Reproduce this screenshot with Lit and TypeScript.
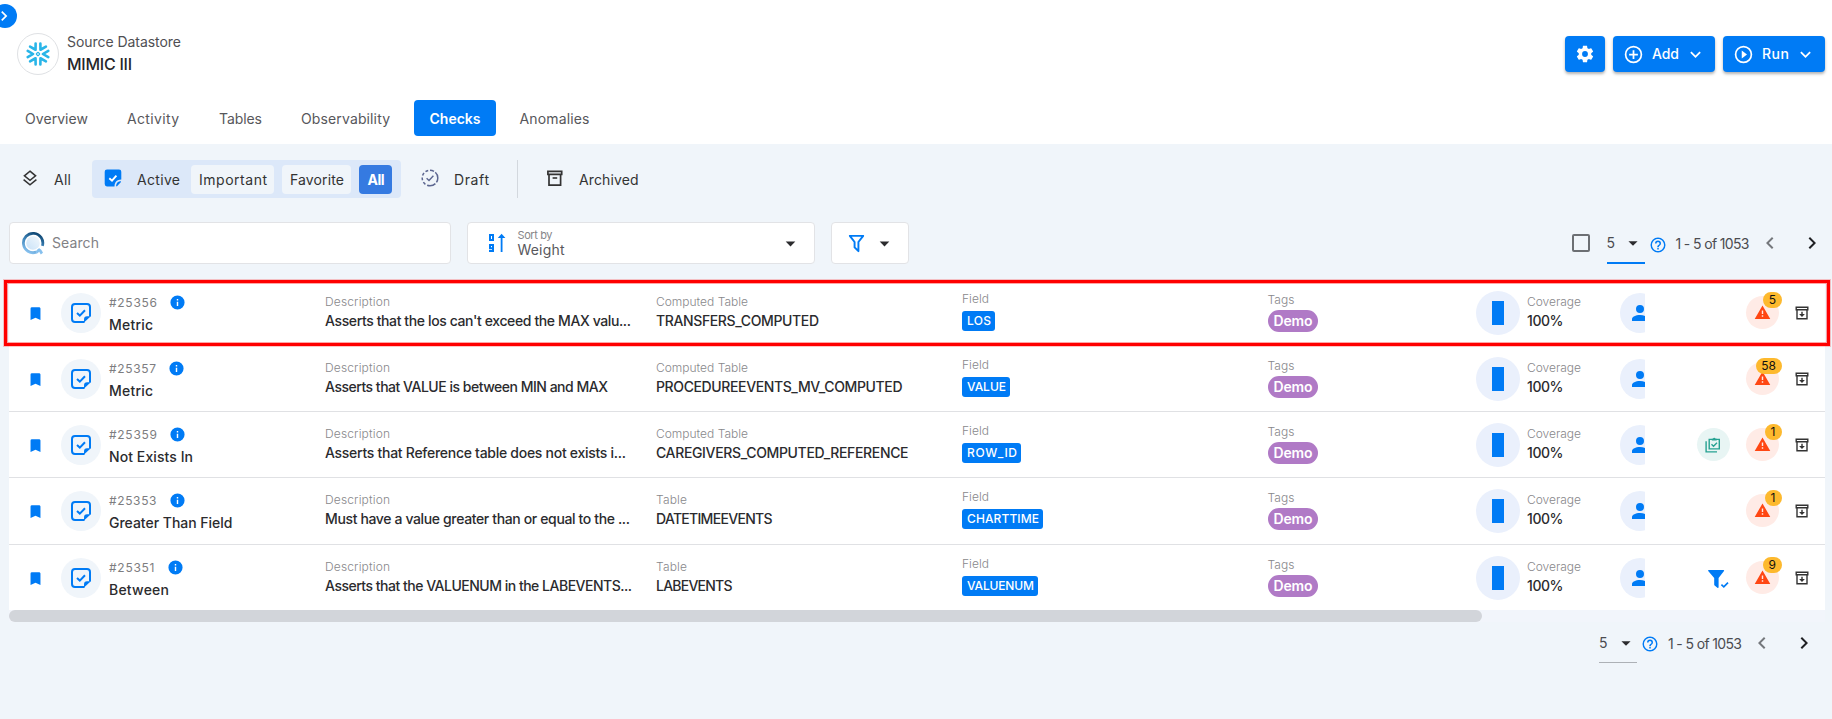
import { LitElement, html, css, svg, nothing } from "lit";
import { customElement, property } from "lit/decorators.js";

/* A single line of text whose tracking is tuned so the glyphs span `w` pixels. */
@customElement("fit-text")
class FitText extends LitElement {
  static styles = css`
    :host { display: block; white-space: pre; }
    .t { display: inline-block; }
  `;
  @property() text = "";
  @property({ type: Number }) w = 0;
  render() {
    return html`<span class="t">${this.text}</span>`;
  }
  updated() {
    const el = this.renderRoot.querySelector(".t") as HTMLElement;
    el.style.letterSpacing = "0px";
    const natural = el.getBoundingClientRect().width - 1;
    const gap = (this.w - natural) / Math.max(1, this.text.length - 1);
    el.style.letterSpacing = gap.toFixed(3) + "px";
    el.style.marginRight = (-gap).toFixed(3) + "px";
    this.style.width = this.w + "px";
  }
}

const t = (text: string, w: number, cls = "") =>
  html`<fit-text class=${cls} .text=${text} .w=${w}></fit-text>`;

const P: Record<string, string> = {
  bookmark: "M17,3H7A2,2 0 0,0 5,5V21L12,18L19,21V5C19,3.89 18.1,3 17,3Z",
  info: "M13,9H11V7H13M13,17H11V11H13M12,2A10,10 0 0,0 2,12A10,10 0 0,0 12,22A10,10 0 0,0 22,12A10,10 0 0,0 12,2Z",
  alert: "M13 14H11V9H13M13 18H11V16H13M1 21H23L12 2L1 21Z",
  account: "M12,4A4,4 0 0,1 16,8A4,4 0 0,1 12,12A4,4 0 0,1 8,8A4,4 0 0,1 12,4M12,14C16.42,14 20,15.79 20,18V20H4V18C4,15.79 7.58,14 12,14Z",
  cog: "M12,15.5A3.5,3.5 0 0,1 8.5,12A3.5,3.5 0 0,1 12,8.5A3.5,3.5 0 0,1 15.5,12A3.5,3.5 0 0,1 12,15.5M19.43,12.97C19.47,12.65 19.5,12.33 19.5,12C19.5,11.67 19.47,11.34 19.43,11L21.54,9.37C21.73,9.22 21.78,8.95 21.66,8.73L19.66,5.27C19.54,5.05 19.27,4.96 19.05,5.05L16.56,6.05C16.04,5.66 15.5,5.32 14.87,5.07L14.5,2.42C14.46,2.18 14.25,2 14,2H10C9.75,2 9.54,2.18 9.5,2.42L9.13,5.07C8.5,5.32 7.96,5.66 7.44,6.05L4.95,5.05C4.73,4.96 4.46,5.05 4.34,5.27L2.34,8.73C2.21,8.95 2.27,9.22 2.46,9.37L4.57,11C4.53,11.34 4.5,11.67 4.5,12C4.5,12.33 4.53,12.65 4.57,12.97L2.46,14.63C2.27,14.78 2.21,15.05 2.34,15.27L4.34,18.73C4.46,18.95 4.73,19.03 4.95,18.95L7.44,17.94C7.96,18.34 8.5,18.68 9.13,18.93L9.5,21.58C9.54,21.82 9.75,22 10,22H14C14.25,22 14.46,21.82 14.5,21.58L14.87,18.93C15.5,18.67 16.04,18.34 16.56,17.94L19.05,18.95C19.27,19.03 19.54,18.95 19.66,18.73L21.66,15.27C21.78,15.05 21.73,14.78 21.54,14.63L19.43,12.97Z",
  plus: "M12,20C7.59,20 4,16.41 4,12C4,7.59 7.59,4 12,4C16.41,4 20,7.59 20,12C20,16.41 16.41,20 12,20M12,2A10,10 0 0,0 2,12A10,10 0 0,0 12,22A10,10 0 0,0 22,12A10,10 0 0,0 12,2M13,7H11V11H7V13H11V17H13V13H17V11H13V7Z",
  play: "M12,20C7.59,20 4,16.41 4,12C4,7.59 7.59,4 12,4C16.41,4 20,7.59 20,12C20,16.41 16.41,20 12,20M12,2A10,10 0 0,0 2,12A10,10 0 0,0 12,22A10,10 0 0,0 22,12A10,10 0 0,0 12,2M10,16.5L16,12L10,7.5V16.5Z",
  down: "M7.41,8.58L12,13.17L16.59,8.58L18,10L12,16L6,10L7.41,8.58Z",
  right: "M8.59,16.58L13.17,12L8.59,7.41L10,6L16,12L10,18L8.59,16.58Z",
  left: "M15.41,16.58L10.83,12L15.41,7.41L14,6L8,12L14,18L15.41,16.58Z",
  caret: "M7,10L12,15L17,10H7Z",
  help: "M11,18H13V16H11V18M12,2A10,10 0 0,0 2,12A10,10 0 0,0 12,22A10,10 0 0,0 22,12A10,10 0 0,0 12,2M12,20C7.59,20 4,16.41 4,12C4,7.59 7.59,4 12,4C16.41,4 20,7.59 20,12C20,16.41 16.41,20 12,20M12,6A4,4 0 0,0 8,10H10A2,2 0 0,1 12,8A2,2 0 0,1 14,10C14,12 11,11.75 11,15H13C13,12.75 16,12.5 16,10A4,4 0 0,0 12,6Z",
  filter: "M15,19.88C15.04,20.18 14.94,20.5 14.71,20.71C14.32,21.1 13.69,21.1 13.3,20.71L9.29,16.7C9.06,16.47 8.96,16.16 9,15.87V10.75L4.21,4.62C3.87,4.19 3.95,3.56 4.38,3.22C4.57,3.08 4.78,3 5,3V3H19V3C19.22,3 19.43,3.08 19.62,3.22C20.05,3.56 20.13,4.19 19.79,4.62L15,10.75V19.88M7.04,5L11,10.06V15.58L13,17.58V10.05L16.96,5H7.04Z",
};

const icon = (name: string, size: number, cls = "") =>
  html`<svg class="ic ${cls}" width=${size} height=${size} viewBox="0 0 24 24"><path fill="currentColor" fill-rule="evenodd" d=${P[name]}></path></svg>`;

const snowflake = html`<svg class="ic" width="26" height="26" viewBox="-13 -13 26 26" fill="none" stroke="currentColor" stroke-width="2.6" stroke-linecap="round" stroke-linejoin="round">
  <rect x="-1.3" y="-1.3" width="2.6" height="2.6" rx=".4" transform="rotate(45)" stroke-width="1.2"></rect>
  ${[0, 60, 120, 180, 240, 300].map((a) => svg`<path transform="rotate(${a})" d="M10.3 -3.2 L4.9 0 L10.3 3.2"></path>`)}
</svg>`;

const layers = html`<svg class="ic" width="16" height="16" viewBox="0 0 16 16" fill="none" stroke="currentColor" stroke-width="1.5"><path d="M8 1.2 L13.6 5.8 L8 10.4 L2.4 5.8Z M1.6 9.6 L8 14.8 L14.4 9.6"></path></svg>`;

const noteSolid = html`<svg class="ic" width="18" height="18" viewBox="0 0 18 18"><path fill="#007bf5" d="M3 .5H15A2.3 2.3 0 0 1 17.3 2.8V10.6C13 10.8 10.6 13 10.5 17.4H3A2.3 2.3 0 0 1 .7 15.1V2.8A2.3 2.3 0 0 1 3 .5Z"></path><path fill="#007bf5" d="M17 12.2V13L13 17.2H12C12 14 14 12.3 17 12.2Z"></path><path d="M5.3 9.2L8 11.6L12.4 6.7" fill="none" stroke="#fff" stroke-width="1.9"></path></svg>`;

const noteLine = html`<svg class="ic" width="20" height="20" viewBox="0 0 20 20" fill="none" stroke="#007bf5" stroke-width="2"><path d="M13.5 19H4A3 3 0 0 1 1 16V4A3 3 0 0 1 4 1H16A3 3 0 0 1 19 4V13.5"></path><path d="M13 19.6V16.2A3 3 0 0 1 16 13.2H19.8Z" fill="#007bf5" stroke="none"></path><path d="M6 10L8.8 12.6L14 7.3"></path></svg>`;

const draft = html`<svg class="ic" width="18" height="18" viewBox="0 0 18 18" fill="none" stroke="#5c6690" stroke-width="1.5"><path d="M9 1.2A7.8 7.8 0 0 1 9 16.8" stroke-dasharray="4.2 1.6 11 1.6 8"></path><path d="M9 16.8A7.8 7.8 0 0 1 9 1.2" stroke-dasharray="2.9 2"></path><path d="M5.6 9.2L8 11.4L12.4 6.8" stroke-width="1.4"></path></svg>`;

const archive = html`<svg class="ic" width="16" height="16" viewBox="0 0 16 16" fill="none" stroke="currentColor" stroke-width="1.7"><path d="M.9 1.3H14.7V4.3H.9Z M2 4.5V15.1H13.6V4.5"></path><path d="M5.6 8H10.2" stroke-width="1.6"></path></svg>`;

const archiveDown = html`<svg class="ic" width="14" height="14" viewBox="0 0 14 14" fill="none" stroke="#333" stroke-width="1.4"><path d="M1.2 1.2H12.8V3.8H1.2Z M2 4V12.8H12V4"></path><path d="M6.3 5.8H7.7V8H9.9L7 10.9L4.1 8H6.3Z" fill="#333" stroke="none"></path></svg>`;

const clipboard = html`<svg class="ic" width="16" height="16" viewBox="0 0 16 16" fill="none" stroke="#26a292" stroke-width="1.4"><path d="M4.2 2.4H14.3V11.9H4.2Z"></path><path d="M1.1 4.2V14.9H12"></path><path d="M6.8 3.6V1.7H8A1.3 1.3 0 0 1 10.5 1.7H11.7V3.6Z" fill="#26a292" stroke="none"></path><path d="M6.5 7.3L8.5 9.2L12 5.7"></path></svg>`;

const filterCheck = html`<svg class="ic" width="21" height="19" viewBox="0 0 21 19"><path fill="#007bf5" d="M.6 0H15.6A.6.6 0 0 1 16 1L10.6 8V17.2A.7.7 0 0 1 9.4 17.7L6.6 15.4A1 1 0 0 1 6.2 14.5V8L.2 1A.6.6 0 0 1 .6 0Z"></path><path d="M13.4 14.6L15.8 16.8L20 12.6" fill="none" stroke="#007bf5" stroke-width="1.7"></path></svg>`;

const searchQ = html`<svg class="ic" width="24" height="24" viewBox="0 0 24 24" fill="none"><defs>
  <linearGradient id="q" x1=".75" y1="0" x2=".3" y2="1"><stop offset="0" stop-color="#0d4470"></stop><stop offset=".5" stop-color="#3f86bb"></stop><stop offset="1" stop-color="#86c0ee"></stop></linearGradient>
  <linearGradient id="d" x1="0" y1="1" x2="1" y2="0"><stop offset="0" stop-color="#c9e2f8"></stop><stop offset="1" stop-color="#f2f8fd"></stop></linearGradient></defs>
  <circle cx="12" cy="12" r="6.8" fill="url(#d)"></circle>
  <path d="M21.4 14.8A9.7 9.7 0 1 0 15.2 21.2" stroke="url(#q)" stroke-width="2.8"></path>
  <path d="M15 21.4C17 20.6 17 19.4 18.2 18.9C20 20 19.6 21 20.9 22.6" stroke="#86c0ee" stroke-width="2.8"></path></svg>`;

const sortNum = html`<svg class="ic" width="18" height="20" viewBox="0 0 18 20" fill="none" stroke="#007bf5" stroke-width="2"><path d="M2 2H5V7H2Z M5 15.2H2V12H5V18H1"></path><path d="M13.6 19V3" stroke-width="1.8"></path><path d="M9.8 5L13.6 .8L17.4 5Z" fill="#007bf5" stroke="none"></path></svg>`;

interface Check {
  id: string; idW: number; name: string; nameW: number; desc: string; descW: number;
  kind: string; kindW: number; table: string; tableW: number; field: string; fieldW: number;
  extra?: "clip" | "filter"; count: string; h: number;
}

const CHECKS: Check[] = [
  { id: "#25356", idW: 47, name: "Metric", nameW: 43, desc: "Asserts that the los can't exceed the MAX valu...", descW: 305, kind: "Computed Table", kindW: 91, table: "TRANSFERS_COMPUTED", tableW: 162, field: "LOS", fieldW: 23, count: "5", h: 66 },
  { id: "#25357", idW: 46, name: "Metric", nameW: 43, desc: "Asserts that VALUE is between MIN and MAX", descW: 282, kind: "Computed Table", kindW: 91, table: "PROCEDUREEVENTS_MV_COMPUTED", tableW: 245.5, field: "VALUE", fieldW: 38, count: "58", h: 66 },
  { id: "#25359", idW: 47, name: "Not Exists In", nameW: 83, desc: "Asserts that Reference table does not exists i...", descW: 300, kind: "Computed Table", kindW: 91, table: "CAREGIVERS_COMPUTED_REFERENCE", tableW: 251.5, field: "ROW_ID", fieldW: 49, extra: "clip", count: "1", h: 66 },
  { id: "#25353", idW: 46.5, name: "Greater Than Field", nameW: 122.5, desc: "Must have a value greater than or equal to the ...", descW: 304, kind: "Table", kindW: 30, table: "DATETIMEEVENTS", tableW: 115.5, field: "CHARTTIME", fieldW: 71, count: "1", h: 67 },
  { id: "#25351", idW: 44.5, name: "Between", nameW: 59, desc: "Asserts that the VALUENUM in the LABEVENTS...", descW: 306, kind: "Table", kindW: 30, table: "LABEVENTS", tableW: 75.5, field: "VALUENUM", fieldW: 66, extra: "filter", count: "9", h: 65 },
];

@customElement("app-root")
class AppRoot extends LitElement {
  static styles = css`
    :host { display: block; width: 1832px; height: 719px; overflow: hidden; background: #f0f5fa; color: #2b2b2e; font: 14px/20px Inter, "Open Sans", sans-serif; position: relative; }
    * { box-sizing: border-box; }
    .ic { display: block; flex: none; }
    .row { display: flex; align-items: center; }
    header { background: #fff; height: 144px; position: relative; }
    .toggle { position: absolute; left: -7px; top: 4px; width: 24px; height: 24px; border-radius: 50%; background: #007bf5; color: #fff; padding: 2px 0 0 1px; }
    .brand { display: flex; justify-content: space-between; padding: 33px 7px 0 17px; height: 100px; align-items: flex-start; }
    .who { display: flex; gap: 8px; }
    .logo { width: 42px; height: 42px; border: 1px solid #dfe1e4; border-radius: 50%; display: grid; place-items: center; color: #29b5e8; }
    .l1 { font-size: 14px; line-height: 20px; margin-top: -1px; color: #4f4f53; }
    .l2 { font-size: 16px; line-height: 24px; font-weight: 500; color: #26262a; }
    .btns { display: flex; gap: 8px; padding-top: 3px; }
    .btn { height: 36px; display: flex; align-items: center; background: #007bf5; color: #fff; border-radius: 4px; box-shadow: 0 2px 3px rgba(0,0,0,.3); font-weight: 500; }
    .btn.sq { width: 40px; justify-content: center; }
    .btn.dd { width: 102px; padding-left: 10px; gap: 8px; }
    .btn .chev { margin-left: -1px; }
    nav { display: flex; align-items: center; padding-left: 25px; color: #57575b; }
    nav .tab { height: 36px; display: flex; align-items: center; padding-top: 2px; }
    .mr40 { margin-right: 40px; } .mr42 { margin-right: 41px; } .mr24 { margin-right: 24.5px; }
    nav .on { background: #007bf5; color: #fff; font-weight: 600; width: 82px; justify-content: center; border-radius: 4px; margin-right: 24px; }
    .filters { display: flex; align-items: center; height: 38px; margin-top: 16px; padding-left: 22px; color: #333; }
    .filters fit-text { padding-top: 2px; }
    .active { display: flex; align-items: center; width: 309px; height: 38px; background: #dce8f9; border-radius: 4px; margin-left: 22px; padding-left: 12px; }
    .chip { height: 29px; border-radius: 4px; background: #f0f5fa; display: flex; align-items: center; justify-content: center; }
    .c1 { width: 83px; margin: 0 8px 0 12px; } .c2 { width: 69px; margin-right: 8px; } .c3 { width: 33px; background: #357ae1; color: #fff; font-weight: 700; }
    .g16 { margin-left: 16px; } .g15 { margin-left: 15px; }
    .sep { width: 1px; height: 38px; background: #d3d8de; margin: 0 29px 0 29px; }
    .nud { margin-top: -2px; }
    .drafti { margin-left: 20px; }
    .tools { display: flex; align-items: center; margin-top: 24px; height: 42px; padding-left: 9px; }
    .box { background: #fff; border: 1px solid #e2e3e6; border-radius: 4px; height: 42px; display: flex; align-items: center; }
    .search { width: 442px; padding-left: 11px; gap: 7px; color: #818185; }
    .sort { width: 348px; margin-left: 16px; padding-left: 20px; }
    .sort .lab { width: 261px; margin-left: 11.5px; }
    .sort .small { font-size: 11px; line-height: 13px; color: #868689; }
    .val { line-height: 16px; color: #58585c; }
    .fbox { width: 78px; margin-left: 16px; padding-left: 12.5px; gap: 5.5px; }
    .blue { color: #007bf5; }
    .cb { width: 18px; height: 18px; border: 2px solid #6c6f73; border-radius: 2px; }
    .pager { display: flex; align-items: center; color: #4b4c50; }
    .top { margin-left: 663px; }
    .size { width: 38px; height: 41px; display: flex; align-items: center; border-bottom: 2px solid #007bf5; gap: 7.5px; }
    .size fit-text { padding-top: 1px; }
    .top .size { margin-left: 16.5px; }
    .size .caret { margin: 1px -2px 0 0; color: #2b2b2e; }
    .help { color: #007bf5; margin: 3px 9px 0 4px; }
    .range { padding-top: 2px; }
    .dim { color: #75787c; margin-left: 9px; }
    .dark { color: #202124; margin-left: 18px; }
    .table { position: relative; width: 1816px; margin: 16px 0 0 9px; }
    .mark { position: absolute; left: -5px; top: 0; width: 1826px; height: 66px; border: 3px solid #f00; box-shadow: 0 0 0 1px rgba(255,0,0,.22), inset 0 0 0 1px rgba(255,0,0,.35); z-index: 2; }
    .check { display: grid; grid-template-columns: 52px 48px 216px 331px 306px 305.5px 208px 51.5px 92.5px 25px 1fr; background: #fff; border-bottom: 1px solid #e0e1e4; }
    .check:last-of-type { border-bottom: 0; }
    .check > div { min-width: 0; }
    .bm { padding: 24.5px 0 0 17.5px; color: #007bf5; }
    .disc { width: 40px; height: 40px; border-radius: 50%; background: #f0f5fa; display: grid; place-items: center; margin-top: 13px; }
    .idr { display: flex; align-items: center; gap: 13px; height: 17px; margin-top: 14px; color: #7d7d80; font-size: 12px; }
    .idr .ic { color: #007bf5; }
    .name { font-weight: 500; margin-top: 4px; }
    .k { font-size: 12px; line-height: 16px; color: #88888b; font-weight: 300; }
    .v { line-height: 20px; font-weight: 500; margin-top: 1px; }
    .pad14 { padding-top: 14px; } .pad11 { padding-top: 11px; } .pad12 { padding-top: 12px; }
    .fchip { display: inline-flex; align-items: center; height: 20px; padding: 0 5px; border-radius: 3px; background: #007bf5; color: #fff; font-size: 12px; font-weight: 500; margin-top: 4px; }
    .tag { display: flex; align-items: center; width: 50px; height: 22px; padding-left: 6px; border-radius: 11px; background: #b07ac6; color: #fff; font-weight: 600; margin-top: 2px; }
    .cov { width: 44px; height: 44px; border-radius: 50%; background: #eaf0fc; display: grid; place-items: center; margin-top: 11px; }
    .bar { width: 12px; height: 24px; background: #007bf5; }
    .clip { overflow: hidden; width: 25px; }
    .clip .disc { background: #eaf0fc; color: #007bf5; width: 40px; }
    .acts { display: flex; justify-content: flex-end; padding: 16px 16px 0 0; }
    .rnd { position: relative; width: 33px; height: 33px; border-radius: 50%; display: grid; place-items: center; }
    .teal { background: #e8f5f4; margin-right: 16px; }
    .fc { margin: 8.5px 17px 0 0; }
    .warn { background: #ffebe6; color: #ff4713; margin-right: 16.5px; }
    .badge { position: absolute; right: -3px; top: -4px; height: 16px; min-width: 17px; padding: 0 5.5px; border-radius: 8px; background: #fdb92e; color: #111; font-size: 12px; line-height: 16px; text-align: center; }
    .ar { margin-top: 9.5px; }
    .track { height: 12px; width: 1816px; margin-left: 9px; background: #f2f5fb; }
    .thumb { width: 1473px; height: 12px; border-radius: 6px; background: #d2d5da; }
    .bottom { margin: 0 0 0 1599px; }
    .bottom .size { border-bottom: 1px solid #adb1b6; }
  `;

  private pager(cls: string, box: boolean) {
    return html`<div class="pager ${cls}">
      ${box ? html`<div class="cb"></div>` : nothing}
      <div class="size">${t("5", 8)}${icon("caret", 22, "caret")}</div>
      ${icon("help", 18, "help")}${t("1 - 5 of 1053", 73, "range")}
      ${icon("left", 24, "dim")}${icon("right", 24, "dark")}
    </div>`;
  }

  private check(c: Check) {
    return html`<div class="check" style="height:${c.h}px">
      <div class="bm">${icon("bookmark", 17)}</div>
      <div><div class="disc">${noteLine}</div></div>
      <div><div class="idr">${t(c.id, c.idW)}${icon("info", 17)}</div>${t(c.name, c.nameW, "name")}</div>
      <div class="pad14">${t("Description", 64, "k")}${t(c.desc, c.descW, "v")}</div>
      <div class="pad14">${t(c.kind, c.kindW, "k")}${t(c.table, c.tableW, "v")}</div>
      <div class="pad11">${t("Field", 26, "k")}<div class="fchip">${t(c.field, c.fieldW)}</div></div>
      <div class="pad12">${t("Tags", 26, "k")}<div class="tag">${t("Demo", 38)}</div></div>
      <div><div class="cov"><div class="bar"></div></div></div>
      <div class="pad14">${t("Coverage", 53, "k")}${t("100%", 35.5, "v")}</div>
      <div class="clip"><div class="disc">${icon("account", 24)}</div></div>
      <div class="acts">
        ${c.extra === "clip" ? html`<div class="rnd teal">${clipboard}</div>` : nothing}
        ${c.extra === "filter" ? html`<div class="fc">${filterCheck}</div>` : nothing}
        <div class="rnd warn">${icon("alert", 17)}<div class="badge">${c.count}</div></div>
        <div class="ar">${archiveDown}</div>
      </div>
    </div>`;
  }

  render() {
    return html`
      <header>
        <div class="toggle">${icon("right", 20)}</div>
        <div class="brand">
          <div class="who">
            <div class="logo">${snowflake}</div>
            <div>${t("Source Datastore", 113, "l1")}${t("MIMIC III", 64, "l2")}</div>
          </div>
          <div class="btns">
            <div class="btn sq">${icon("cog", 20)}</div>
            <div class="btn dd">${icon("plus", 21)}${t("Add", 26)}${icon("down", 21, "chev")}</div>
            <div class="btn dd">${icon("play", 21)}${t("Run", 26)}${icon("down", 21, "chev")}</div>
          </div>
        </div>
        <nav>
          <div class="tab mr40">${t("Overview", 62)}</div>
          <div class="tab mr42">${t("Activity", 51)}</div>
          <div class="tab mr40">${t("Tables", 42)}</div>
          <div class="tab mr24">${t("Observability", 88)}</div>
          <div class="tab on">${t("Checks", 50)}</div>
          <div class="tab">${t("Anomalies", 69)}</div>
        </nav>
      </header>
      <div class="filters">
        <div class="nud">${layers}</div>${t("All", 16, "g16")}
        <div class="active"><div class="nud">${noteSolid}</div>${t("Active", 42, "g15")}
          <div class="chip c1">${t("Important", 67)}</div>
          <div class="chip c2">${t("Favorite", 53)}</div>
          <div class="chip c3">${t("All", 16)}</div>
        </div>
        <div class="nud drafti">${draft}</div>${t("Draft", 34, "g15")}
        <div class="sep"></div>
        <div class="nud">${archive}</div>${t("Archived", 58.5, "g16")}
      </div>
      <div class="tools">
        <div class="box search">${searchQ}${t("Search", 46)}</div>
        <div class="box sort">${sortNum}<div class="lab">${t("Sort by", 34, "small")}${t("Weight", 46, "val")}</div>${icon("caret", 23)}</div>
        <div class="box fbox"><span class="blue">${icon("filter", 23)}</span>${icon("caret", 23)}</div>
        ${this.pager("top", true)}
      </div>
      <div class="table"><div class="mark"></div>${CHECKS.map((c) => this.check(c))}</div>
      <div class="track"><div class="thumb"></div></div>
      ${this.pager("bottom", false)}
    `;
  }
}
